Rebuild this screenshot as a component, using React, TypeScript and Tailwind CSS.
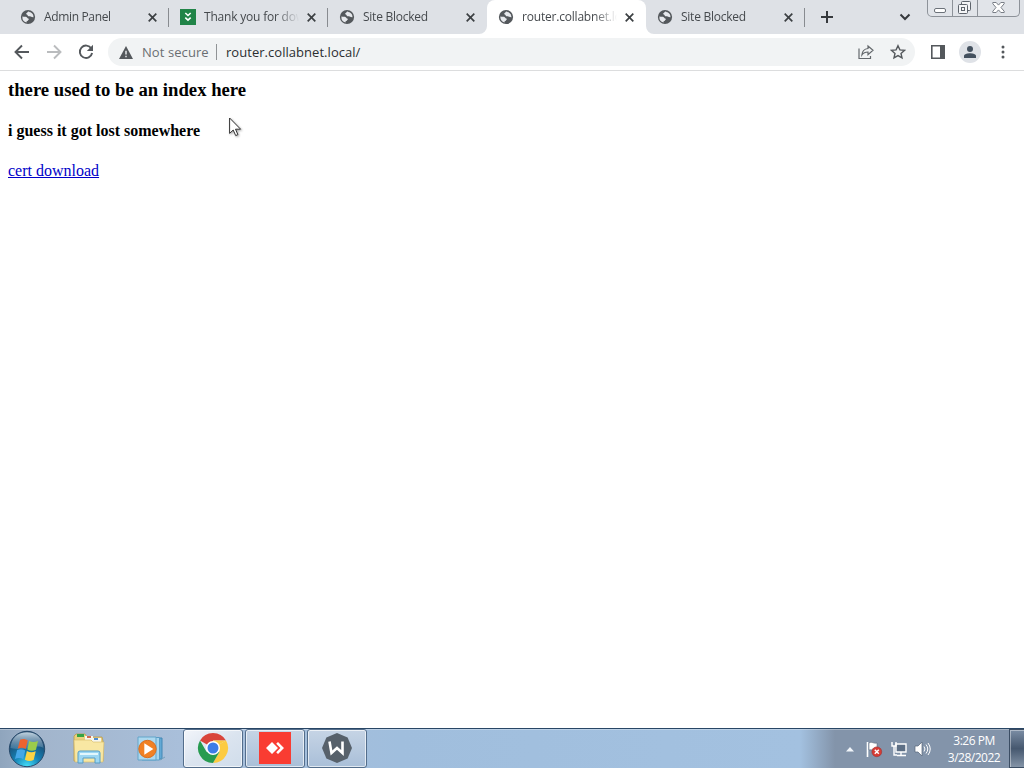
import { ReactNode } from 'react'
import clsx from 'clsx'

type Tab = {
  title: string
  icon: 'globe' | 'download'
  active?: boolean
  tracking: string
}

const tabs: Tab[] = [
  { title: 'Admin Panel', icon: 'globe', tracking: 'tracking-[-0.35px]' },
  { title: 'Thank you for downloading', icon: 'download', tracking: 'tracking-[-0.2px]' },
  { title: 'Site Blocked', icon: 'globe', tracking: 'tracking-[-0.25px]' },
  { title: 'router.collabnet.local', icon: 'globe', active: true, tracking: 'tracking-[-0.2px]' },
  { title: 'Site Blocked', icon: 'globe', tracking: 'tracking-[-0.25px]' },
]

export default function App() {
  return (
    <div className="flex h-[768px] w-[1024px] flex-col overflow-hidden bg-white font-['Open_Sans','Noto_Sans',sans-serif]">
      <TabStrip />
      <Toolbar />
      <Page />
      <Taskbar />
    </div>
  )
}

function TabStrip() {
  return (
    <div className="relative flex h-[34px] shrink-0 bg-[#dee1e6] pl-[9px]">
      {tabs.map((tab, i) => (
        <TabItem key={i} tab={tab} first={i === 0} divider={!tab.active && !tabs[i + 1]?.active} />
      ))}
      <div className="flex w-[44px] items-center justify-center">
        <svg width="12" height="12" viewBox="0 0 12 12" stroke="#36393d" strokeWidth="2">
          <path d="M6 0v12M0 6h12" />
        </svg>
      </div>
      <div className="ml-auto mr-[113px] flex items-center">
        <svg width="12" height="8" viewBox="0 0 12 8" fill="none" stroke="#36393d" strokeWidth="2">
          <path d="M1.5 1.5L6 6l4.5-4.5" />
        </svg>
      </div>
      <WindowControls />
    </div>
  )
}

function TabItem({ tab, first, divider }: { tab: Tab; first: boolean; divider: boolean }) {
  return (
    <div
      className={clsx(
        'relative flex h-full shrink-0 items-center pl-[11px]',
        first ? 'w-[160px]' : 'w-[159px]',
        tab.active && 'rounded-t-lg bg-white'
      )}
    >
      {tab.active && (
        <>
          {/* curved feet of the active tab */}
          <svg className="absolute bottom-0 -left-2" width="8" height="8" viewBox="0 0 8 8">
            <path d="M8 0v8H0a8 8 0 0 0 8-8z" fill="#fff" />
          </svg>
          <svg className="absolute bottom-0 -right-2" width="8" height="8" viewBox="0 0 8 8">
            <path d="M0 0v8h8a8 8 0 0 1-8-8z" fill="#fff" />
          </svg>
        </>
      )}
      {tab.icon === 'globe' ? <Globe /> : <DownloadIcon />}
      <span
        className={clsx(
          'ml-2 w-[95px] overflow-hidden whitespace-nowrap text-[12px] leading-4 text-[#45494d]',
          '[mask-image:linear-gradient(to_right,black_76%,transparent)]',
          tab.tracking
        )}
      >
        {tab.title}
      </span>
      <svg
        className={first ? 'ml-[9px]' : 'ml-[8px]'}
        width="9"
        height="9"
        viewBox="0 0 9 9"
        stroke="#3c4043"
        strokeWidth="1.7"
      >
        <path d="M.7.7l7.6 7.6M8.3.7L.7 8.3" />
      </svg>
      {divider && <div className="absolute top-[8px] right-0 h-[19px] w-px bg-[#888b90]" />}
    </div>
  )
}

function Globe() {
  return (
    <svg width="16" height="16" viewBox="0 0 16 16" className="shrink-0">
      <circle cx="8" cy="8" r="7.1" fill="#54585c" />
      <path
        d="M8.6 2.5C7.500 2.700 7.400 3.700 6.700 4c-.8.3-.5 1.200.1 1.500.6.2.7.7 1 1.300.6.9 1.600.3 2.200.5.8.3 1.500 1 3.500.9A5.500 5.500 0 0 0 10.600 3.200c-.6.300-1.100-.5-2-.7zM2.400 7.600c1.500.2 2.900-.2 4.100.3.8.4.7 1.400 1.700 1.500.8.2.8 1.100.1 1.500-.5.4-.4 1-1.100 1.100-.7.1-.7.700-.6 1.600A5.700 5.700 0 0 1 2.400 7.600z"
        fill="#e6e8ec"
      />
    </svg>
  )
}

function DownloadIcon() {
  return (
    <svg width="16" height="16" viewBox="0 0 16 16" className="shrink-0">
      <path d="M0 0h16v16H0z" fill="#218448" />
      <path d="M5.300 4l2.700 2.500L10.700 4M5.300 8.700L8 11.200l2.700-2.500" fill="none" stroke="#fff" strokeWidth="1.600" />
    </svg>
  )
}

function WindowControls() {
  return (
    <div className="absolute top-0 right-[4px] flex h-[17px] w-[93px] overflow-hidden rounded-b-[5px] border border-t-0 border-[#8d9299] bg-[#e1e4e9]">
      <div className="flex w-[25px] items-end justify-center border-r border-[#8d9299] pb-[3px]">
        <svg width="12" height="5" viewBox="0 0 12 5" fill="#fff" stroke="#6c727a">
          <rect x=".5" y=".5" width="11" height="4" rx="1.500" />
        </svg>
      </div>
      <div className="flex w-[25px] items-end justify-center border-r border-[#8d9299] pr-[1px] pb-[2px]">
        <svg width="13" height="13" viewBox="0 0 13 13" fill="#f4f5f7" stroke="#5e646c">
          <rect x="3.500" y=".5" width="9" height="9" rx="1" />
          <rect x=".5" y="3.500" width="9" height="9" rx="1" />
          <rect x="3.500" y="6.500" width="3" height="3" />
        </svg>
      </div>
      <div className="flex flex-1 items-end justify-center pb-[3px]">
        <svg width="13" height="11" viewBox="0 0 13 11" fill="#fff" stroke="#6c727a" strokeWidth=".9">
          <path d="M.8.5h3.400l2.300 2.600L8.800.5h3.400v1.200L9 5.500l3.200 3.800v1.200H8.800L6.500 7.900l-2.300 2.600H.8V9.300L4 5.500.8 1.700z" />
        </svg>
      </div>
    </div>
  )
}

function Toolbar() {
  return (
    <div className="flex h-[37px] shrink-0 items-center border-b border-[#dcddde] bg-white pl-[14px]">
      <svg width="16" height="16" viewBox="0 0 16 16" fill="none" stroke="#54585c" strokeWidth="1.900">
        <path d="M15 8H2M8 1.500L1.500 8 8 14.500" />
      </svg>
      <svg className="ml-4" width="16" height="16" viewBox="0 0 16 16" fill="none" stroke="#babcbe" strokeWidth="1.900">
        <path d="M1 8h13M8 1.500L14.500 8 8 14.500" />
      </svg>
      <svg className="ml-4" width="16" height="16" viewBox="0 0 16 16">
        <path d="M13.300 4.500A6.200 6.200 0 1 0 14.100 9" fill="none" stroke="#54585c" strokeWidth="1.900" />
        <path d="M15 .8V7H8.800z" fill="#54585c" />
      </svg>

      <div className="ml-[14px] flex h-[28px] w-[807px] items-center rounded-full bg-[#f1f3f4] pl-[11px]">
        <svg width="14" height="13" viewBox="0 0 14 13">
          <path d="M7 0l7 13H0z" fill="#54585c" />
          <path d="M6.300 4.800h1.400v3.700H6.300zM6.300 9.800h1.400v1.400H6.300z" fill="#f1f3f4" />
        </svg>
        <span className="mt-[2px] ml-[9px] w-[74px] whitespace-nowrap text-[13px] tracking-[0.08px] text-[#6a6e72]">
          Not secure
        </span>
        <div className="h-4 w-px bg-[#909396]" />
        <span className="mt-[2px] ml-[9px] whitespace-nowrap text-[13px] tracking-[0.04px] text-[#2b2e31]">
          router.collabnet.local/
        </span>
        <svg className="mr-[16px] ml-auto" width="16" height="16" viewBox="0 0 16 16" fill="none" stroke="#64686c" strokeWidth="1.200">
          <path d="M1 4.500v10h11.500V12M10 2l5 4.300-5 4.300V8C7 8 5.200 9 3.900 11c.2-3.300 2-6 6.100-6.500z" />
        </svg>
        <svg className="mr-[9px]" width="16" height="16" viewBox="0 0 16 16" fill="none" stroke="#54585c" strokeWidth="1.400">
          <path d="M8 1.700l1.900 4.200 4.500.5-3.400 3 1 4.500L8 11.600l-4 2.300 1-4.500-3.400-3 4.500-.5z" />
        </svg>
      </div>

      <svg className="ml-[16px]" width="14" height="14" viewBox="0 0 14 14">
        <path d="M.8.8h12.400v12.400H.8z" fill="#fff" stroke="#54585c" strokeWidth="1.600" />
        <path d="M9 0h5v14H9z" fill="#54585c" />
      </svg>
      <div className="ml-[14px] flex size-[22px] items-center justify-center rounded-full bg-[#dfe2e7]">
        <svg width="12" height="12" viewBox="0 0 12 12" fill="#44515f">
          <circle cx="6" cy="3" r="3" />
          <path d="M0 12V9.800C0 8 3.500 7.200 6 7.200s6 .8 6 2.600V12z" />
        </svg>
      </div>
      <svg className="ml-[20px]" width="4" height="14" viewBox="0 0 4 14" fill="#54585c">
        <circle cx="2" cy="2" r="1.500" />
        <circle cx="2" cy="7" r="1.500" />
        <circle cx="2" cy="12" r="1.500" />
      </svg>
    </div>
  )
}

function Page() {
  return (
    <div className="relative flex-1 bg-white px-2 font-['Liberation_Serif',serif] text-black">
      <h3 className="mt-[8px] text-[18.7px] leading-[22px] font-bold">there used to be an index here</h3>
      <h4 className="mt-[21px] text-[16px] leading-[18px] font-bold">i guess it got lost somewhere</h4>
      <a href="#" className="mt-[22px] block w-fit text-[16px] leading-[18px] text-[#0000c8] underline">
        cert download
      </a>
      {/* mouse pointer */}
      <svg className="absolute top-[46px] left-[229px] drop-shadow-[1px_1px_1px_rgba(0,0,0,0.35)]" width="13" height="20" viewBox="0 0 13 20">
        <path d="M.6 1v15.400l3.600-3.400 2.500 5.600 2.200-1-2.400-5.400h5.100z" fill="#fff" stroke="#333" strokeWidth="1" />
      </svg>
    </div>
  )
}

function Taskbar() {
  return (
    <div className="flex h-[40px] shrink-0 border-t border-[#294665] bg-[linear-gradient(90deg,#8fa5bd_0px,#a2b5cc_40px,#a9bfda_180px,#a0bedd_400px,#a3c1e0_800px,#8394aa_835px,#8394aa_1024px)] shadow-[inset_0_1px_0_rgba(255,255,255,0.3)]">
      <div className="flex w-[54px] items-center justify-center">
        <StartOrb />
      </div>
      <div className="flex w-[70px] items-center justify-center">
        <Folder />
      </div>
      <div className="flex w-[59px] items-center pl-[13px]">
        <MediaPlayer />
      </div>
      <TaskButton active>
        <Chrome />
      </TaskButton>
      <TaskButton>
        <svg width="32" height="32" viewBox="0 0 32 32">
          <path d="M0 0h32v32H0z" fill="#f93c32" />
          <path d="M12 10l6 6-6 6-6-6zM16.200 11.800L18 10l6 6-6 6-1.800-1.800 4.200-4.200z" fill="#fff" transform="translate(1 0)" />
        </svg>
      </TaskButton>
      <TaskButton>
        <svg width="32" height="32" viewBox="0 0 32 32">
          <path d="M16 1l10.600 4.400L31 16l-4.400 10.600L16 31 5.400 26.600 1 16 5.400 5.400z" fill="#57616b" />
          <path d="M8.500 9.500l2 11.500 5.500-5 5.500 5V9.500" fill="none" stroke="#fff" strokeWidth="2.600" />
        </svg>
      </TaskButton>
      <Tray />
    </div>
  )
}

function TaskButton({ active, children }: { active?: boolean; children: ReactNode }) {
  return (
    <div
      className={clsx(
        'mr-[2px] flex h-[39px] w-[60px] items-center justify-center rounded-[3px] border border-[#536d8b] pb-[1px] shadow-[inset_0_0_0_1px_rgba(255,255,255,0.65)]',
        active
          ? 'bg-linear-to-br from-[#f2f5fa] via-[#dbe4ef] to-[#d0ddeb]'
          : 'bg-linear-to-b from-[#c6d4e5] to-[#a9bfd8]'
      )}
    >
      {children}
    </div>
  )
}

function StartOrb() {
  return (
    <svg width="38" height="38" viewBox="0 0 38 38">
      <defs>
        <radialGradient id="orb" cx=".5" cy="1" r=".85">
          <stop offset="0" stopColor="#45e0fa" />
          <stop offset=".45" stopColor="#1582b5" />
          <stop offset="1" stopColor="#1d4267" />
        </radialGradient>
        <linearGradient id="gloss" x2="0" y2="1">
          <stop offset="0" stopColor="#dcecf5" stopOpacity=".85" />
          <stop offset="1" stopColor="#7ba3c0" stopOpacity=".35" />
        </linearGradient>
      </defs>
      <circle cx="19" cy="19" r="17.700" fill="url(#orb)" stroke="#284b6c" />
      <path d="M2.500 18C3 8 10 2.300 19 2.300S35 8 35.500 18C27 13 20 22 2.500 18z" fill="url(#gloss)" />
      <g transform="translate(-2.700 -2.600) scale(1.180)">
        <path d="M12.500 10.500c2.500-1.300 4.500-.8 6.500.4l-1.700 7.300c-2-1.100-4.200-1.400-6.800-.2z" fill="#ec632f" />
        <path d="M20.200 11.500c2.500 1.300 4.800 1.300 7.500 0L26 19c-2.600 1.200-5 1-7.300-.2z" fill="#9ccc4a" />
        <path d="M10 19.200c2.700-1.100 4.800-.8 6.900.3L15.200 27c-2-1.100-4.300-1.500-7-.2z" fill="#45a7e8" />
        <path d="M18.300 20.100c2.400 1.300 4.800 1.300 7.500.2L24 27.700c-2.600 1.300-5 1-7.400-.2z" fill="#fcd344" />
      </g>
    </svg>
  )
}

function Folder() {
  return (
    <svg width="34" height="32" viewBox="0 0 34 32">
      <path d="M2 3l2-2h9l2 3h15l1 4v20H2z" fill="#ead17e" stroke="#b99b4b" strokeWidth=".8" />
      <path d="M5 1h7v3H5z" fill="#35a344" />
      <path d="M13 3h8v4h-8zM20 5h9v4h-9z" fill="#f8f7ec" />
      <path d="M15 3h4v2h-4z" fill="#d36b50" />
      <path d="M22 5h4v2h-4z" fill="#4d8bd1" />
      <path d="M2 7h17l2 2h11l-1 20H3z" fill="#f8e7a3" stroke="#d5b967" strokeWidth=".6" />
      <path d="M6 30V20q0-2 2-2h18q2 0 2 2v10h-5v-5H11v5z" fill="#9dd7f2" stroke="#579dc5" />
      <path d="M8 21h18" stroke="#e2f7fd" strokeWidth="2" />
    </svg>
  )
}

function MediaPlayer() {
  return (
    <svg width="29" height="26" viewBox="0 0 29 26">
      <path d="M8 2h17v21H8z" fill="#62a9d5" stroke="#4387b4" />
      <path d="M5 1.500h17.500V24H5z" fill="#a6d5ee" stroke="#5a9dc6" />
      <path d="M1 1h18v23H1z" fill="#acd8ef" stroke="#62a5ca" />
      <path d="M23 24l5-3" stroke="#72a1be" />
      <circle cx="10.500" cy="13" r="8.700" fill="#f18124" stroke="#d77022" />
      <path d="M7.300 7.300v11.400l9-5.700z" fill="#fff" />
    </svg>
  )
}

function Chrome() {
  return (
    <svg width="32" height="32" viewBox="0 0 32 32">
      <path d="M16 16L3 8.500A15 15 0 0 1 29 8.500H16z" fill="#d9453b" />
      <path d="M16 16l13-7.500A15 15 0 0 1 16 31l6.500-11.300z" fill="#fccb42" />
      <path d="M29 8.500H16v7.500z" fill="#fccb42" />
      <path d="M3 8.500A15 15 0 0 0 16 31l6.500-11.300H16L9.500 19.700z" fill="#279b50" />
      <circle cx="16" cy="16" r="7" fill="#fff" />
      <circle cx="16" cy="16" r="5.500" fill="#3c7de8" />
    </svg>
  )
}

function Tray() {
  return (
    <div className="ml-auto flex items-center text-white">
      <svg width="8" height="5" viewBox="0 0 8 5" className="mt-[2px]">
        <path d="M4 0l4 4.500H0z" fill="#f1f5fa" />
      </svg>
      {/* action center */}
      <svg className="mt-[2px] ml-[12px]" width="17" height="17" viewBox="0 0 17 17">
        <path d="M1.500 1v15" stroke="#fff" strokeWidth="1.600" />
        <path d="M3 2c3-2 4 1 8 0v7c-3 1-5-1-8 0z" fill="#fff" stroke="#505c6c" strokeWidth=".5" />
        <circle cx="10.800" cy="10.800" r="4.900" fill="#d63c35" stroke="#9f3030" strokeWidth=".6" />
        <path d="M8.800 8.800l4 4m0-4l-4 4" stroke="#fff" strokeWidth="1.500" />
      </svg>
      {/* network */}
      <svg className="mt-[1px] ml-[8px]" width="17" height="16" viewBox="0 0 17 16" fill="none" stroke="#fff" strokeWidth="1.400">
        <path d="M5 3h10v8H5z" fill="#5d6f85" />
        <path d="M10 11v3M6 14.500h9M1 1v4h4V1M3 5v9h3" />
      </svg>
      {/* volume */}
      <svg className="mt-[1px] ml-[6px]" width="17" height="16" viewBox="0 0 17 16" fill="none" stroke="#fff">
        <path d="M1 5h3l4-4v14l-4-4H1z" fill="#fff" stroke="#56647a" strokeWidth=".7" />
        <path d="M10 5.500q2 2.500 0 5M12 3.500q3.500 4.500 0 9M14 2q4.500 6 0 12" />
      </svg>
      <div className="mr-[1px] ml-[9px] flex w-[68px] flex-col items-center text-[12px] leading-[17px] tracking-[-0.5px]">
        <span>3:26 PM</span>
        <span className="whitespace-nowrap">3/28/2022</span>
      </div>
      <div className="h-[39px] w-[15px] border border-r-0 border-[#3b4d63] bg-linear-to-b from-[#7c8ea5] via-[#46586f] to-[#8494a7] shadow-[inset_1px_1px_0_rgba(255,255,255,0.4)]" />
    </div>
  )
}
